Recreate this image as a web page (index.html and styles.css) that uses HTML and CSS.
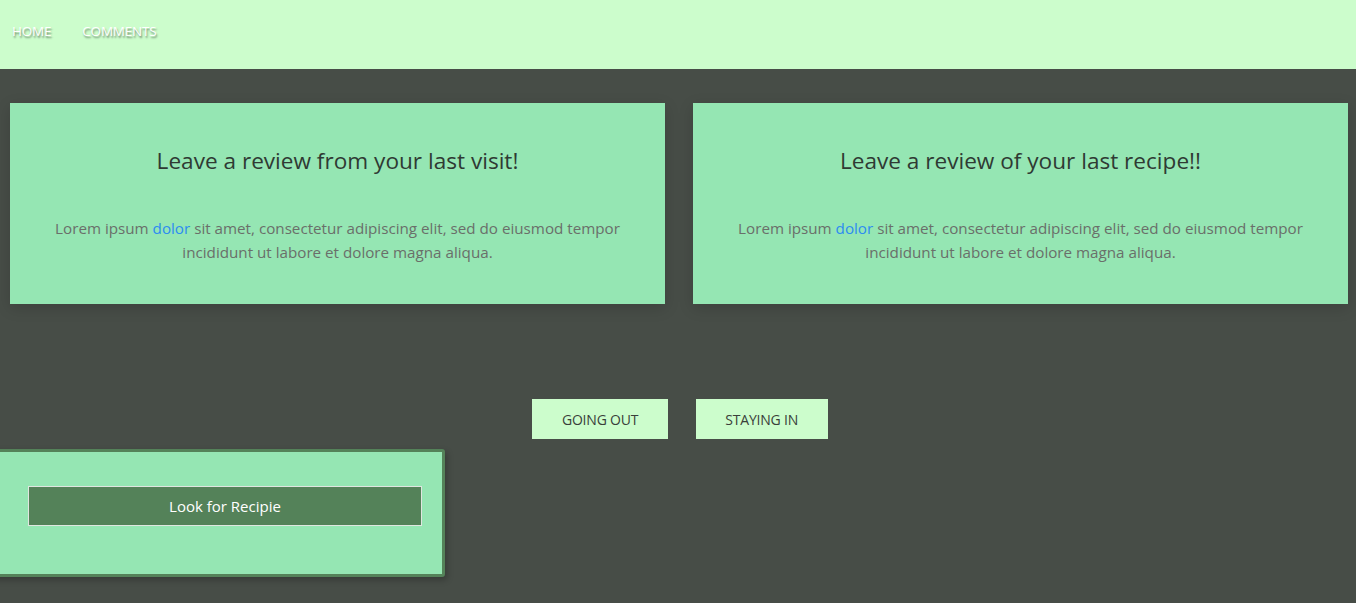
FILE: index.html
```html
<!DOCTYPE html>
<html>
<head>
<meta charset="utf-8">
<link rel="stylesheet" href="styles.css">
</head>
<body>
<header class="topbar">
  <nav class="nav">
    <a class="nav-link" href="#">HOME</a>
    <a class="nav-link" href="#">COMMENTS</a>
  </nav>
</header>
<main class="main">
  <section class="cards">
    <div class="card">
      <h2 class="card-title">Leave a review from your last visit!</h2>
      <p class="card-text">Lorem ipsum <a class="card-link" href="#">dolor</a> sit amet, consectetur adipiscing elit, sed do eiusmod tempor incididunt ut labore et dolore magna aliqua.</p>
    </div>
    <div class="card">
      <h2 class="card-title">Leave a review of your last recipe!!</h2>
      <p class="card-text">Lorem ipsum <a class="card-link" href="#">dolor</a> sit amet, consectetur adipiscing elit, sed do eiusmod tempor incididunt ut labore et dolore magna aliqua.</p>
    </div>
  </section>
  <section class="choices">
    <button class="choice going">GOING OUT</button>
    <button class="choice staying">STAYING IN</button>
  </section>
  <section class="search-box">
    <button class="search-btn">Look for Recipie</button>
  </section>
</main>
</body>
</html>
```
FILE: styles.css
```css
* { box-sizing: border-box; }
html, body { margin: 0; padding: 0; }
body {
  background: #474d47;
  font-family: "Open Sans", "Noto Sans", sans-serif;
  height: 603px;
  overflow: hidden;
}
.topbar {
  background: #ccfdcc;
  height: 69px;
  display: flex;
  align-items: center;
  padding-left: 12px;
}
.nav { display: flex; gap: 31px; margin-top: -7px; }
.nav-link {
  color: #fff;
  text-decoration: none;
  font-size: 13.5px;
  letter-spacing: -0.2px;
  text-shadow: 1px 2px 2px rgba(0,0,0,0.45);
}
.main { padding-top: 34px; }
.cards {
  display: flex;
  gap: 28px;
  padding: 0 8px 0 10px;
}
.card {
  flex: 1;
  background: #95e6b3;
  height: 201px;
  text-align: center;
  padding: 43px 30px 0;
  box-shadow: 0 4px 14px rgba(0,0,0,0.15);
}
.card-title {
  margin: 0;
  font-weight: 400;
  font-size: 22.6px;
  line-height: 30px;
  color: #2f3a33;
}
.card-text {
  margin: 40px 0 0;
  font-size: 15.2px;
  line-height: 24px;
  color: #6a6f6a;
}
.card-link { color: #2d8cf0; text-decoration: none; }
.choices {
  display: flex;
  justify-content: center;
  gap: 28px;
  margin-top: 95px;
  padding-left: 4px;
}
.choice {
  background: #ccfdcc;
  border: none;
  height: 40px;
  font-family: inherit;
  font-size: 14px;
  color: #3a3f3a;
  padding: 0 29.5px;
  letter-spacing: -0.2px;
}
.search-box {
  margin-top: 10px;
  margin-left: -10px;
  width: 455px;
  height: 128px;
  background: #95e6b3;
  border: 3px solid #548259;
  border-radius: 3px;
  padding: 34px 20px 0 35px;
  box-shadow: 2px 3px 6px rgba(0,0,0,0.25);
}
.search-btn {
  width: 394px;
  height: 40px;
  background: #548259;
  border: 1px solid #e0e6e0;
  color: #fff;
  font-family: inherit;
  font-size: 15px;
}
```
